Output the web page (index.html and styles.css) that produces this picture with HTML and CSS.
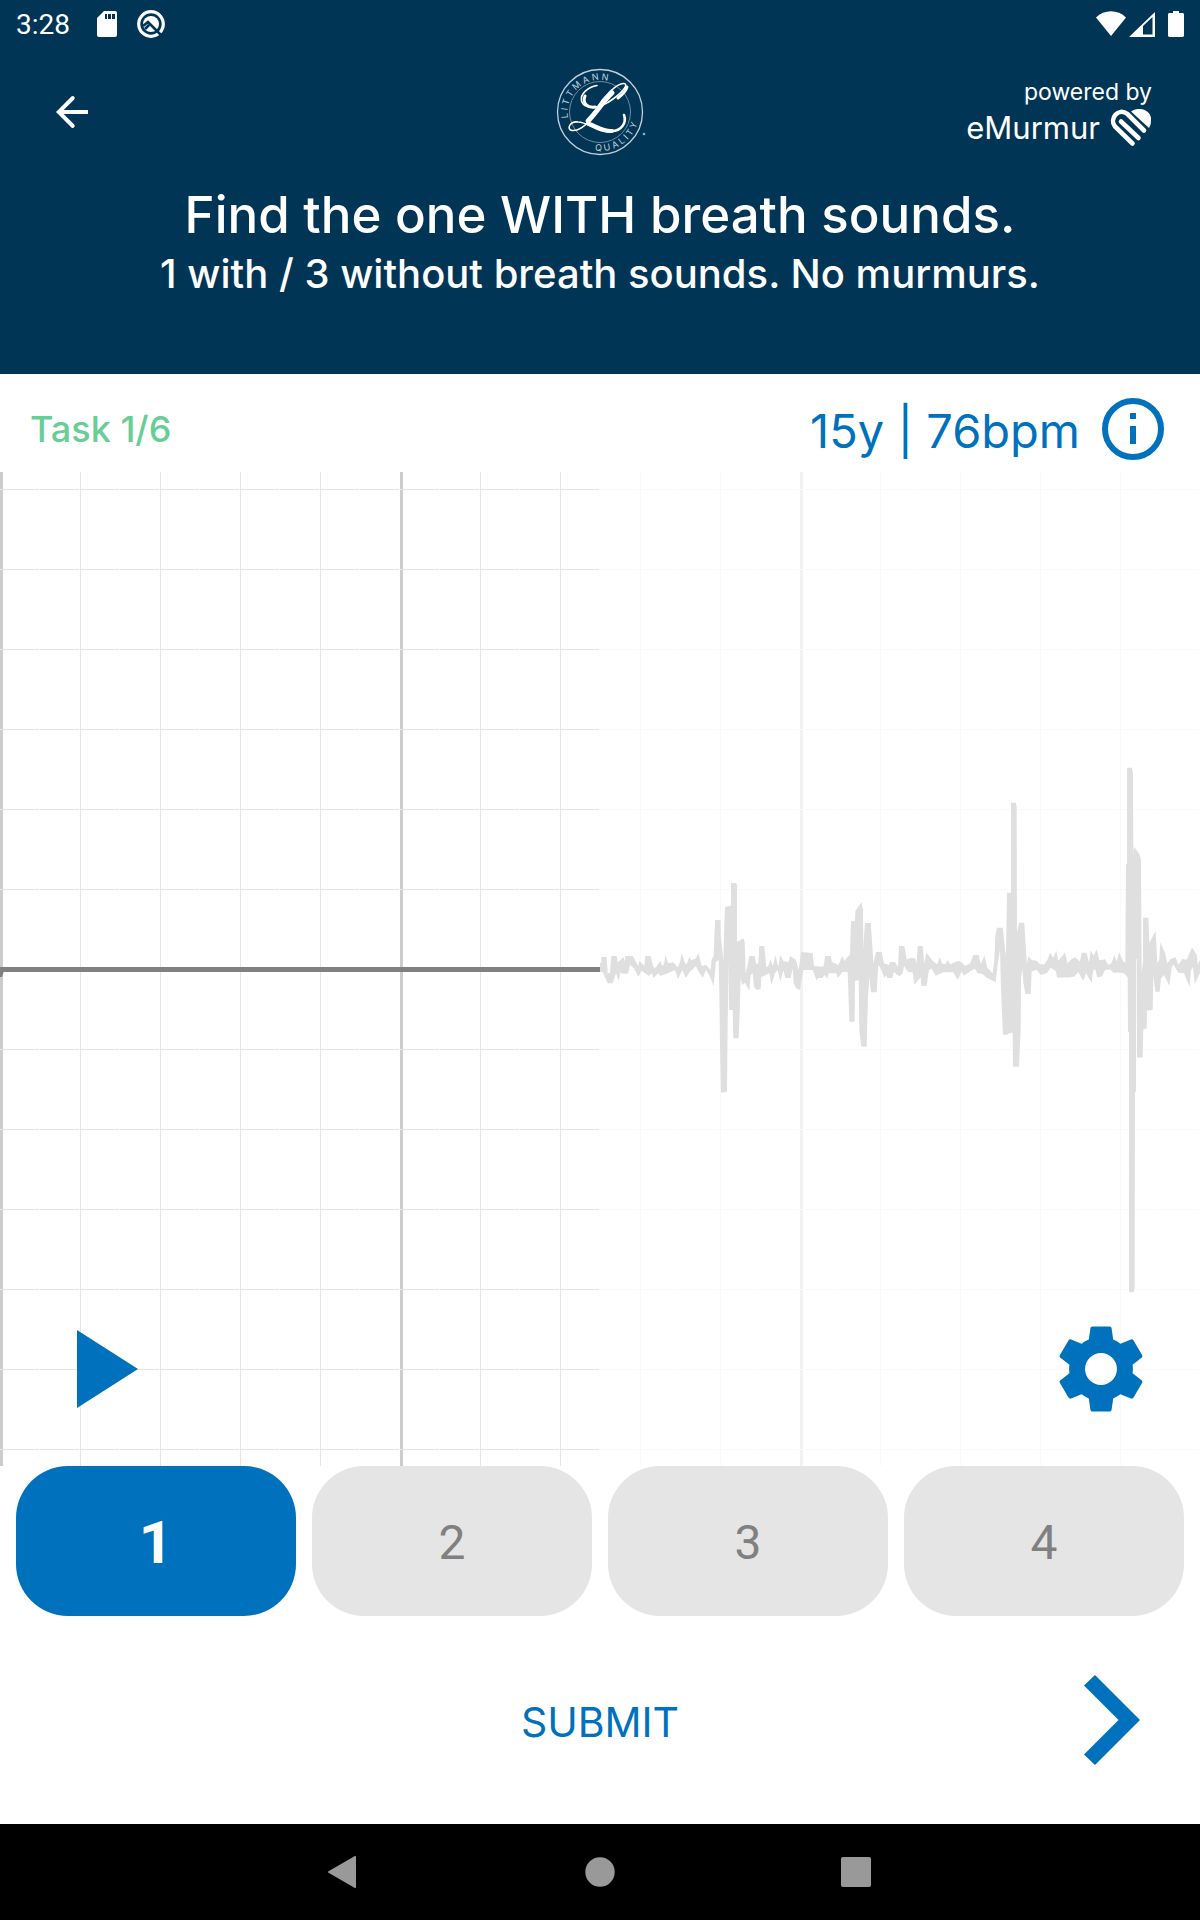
FILE: index.html
```html
<!DOCTYPE html>
<html lang="en">
<head>
<meta charset="utf-8">
<meta name="viewport" content="width=device-width, initial-scale=1">
<title>Find the one with breath sounds</title>
<link rel="stylesheet" href="styles.css">
</head>
<body>
<div class="app">
  <header class="header">
    <div class="status-bar">
      <span class="clock">3:28</span>
      <svg class="status-sd" width="20" height="26" viewBox="0 0 20 26" aria-hidden="true"><path fill="#fff" fill-rule="evenodd" d="M7 0h11a2 2 0 0 1 2 2v22a2 2 0 0 1-2 2H2a2 2 0 0 1-2-2V7zM8 3v5h2V3zm3 0v5h3V3zm4 0v5h3V3z"/></svg>
      <svg class="status-q" width="28" height="28" viewBox="0 0 28 28" aria-hidden="true"><circle cx="14" cy="14" r="12.3" fill="none" stroke="#fff" stroke-width="3.2"/><circle cx="14" cy="14" r="8" fill="#fff"/><path fill="none" stroke="#003556" stroke-width="2.6" d="M6 16l5-4 13 13M8 19l4-4"/></svg>
      <span class="spacer"></span>
      <svg width="30" height="26" viewBox="0 0 30 26" aria-hidden="true"><path fill="#fff" d="M0 6.500C8-2 22-2 30 6.500L15 25z"/></svg>
      <svg class="status-signal" width="26" height="26" viewBox="0 0 26 26" aria-hidden="true"><path fill="#fff" fill-rule="evenodd" d="M0 26L26 1v25zM14 15v8.500h9.500V6z"/></svg>
      <svg class="status-battery" width="16" height="26" viewBox="0 0 16 26" aria-hidden="true"><path fill="#fff" d="M5 0h6v2h4l1 1v22l-1 1H1l-1-1V3l1-1h4z"/></svg>
    </div>
    <div class="top-row">
      <button class="icon-button back" aria-label="Back"><svg width="48" height="48" viewBox="0 0 24 24"><path fill="#fff" d="M20 11H7.830l5.290-5.290a1 1 0 0 0-1.410-1.410L4 12l7.710 7.700a1 1 0 0 0 1.410-1.410L7.830 13H20z"/></svg></button>
      <svg class="logo" width="100" height="88" viewBox="-50 -44 100 88" role="img" aria-label="Littmann Quality">
        <defs>
          <path id="arc-top" d="M-32 6A32.500 32.500 0 1 1 32 6"/>
          <path id="arc-bottom" d="M-5 38.700A39 39 0 0 0 38 -9"/>
        </defs>
        <circle r="42.500" fill="none" stroke="#c3d0da" stroke-width="1.300"/>
        <circle r="30.500" fill="none" stroke="#6d8ba1" stroke-width="1"/>
        <text class="logo-text"><textPath href="#arc-top">L I T T M A N N</textPath></text>
        <text class="logo-text"><textPath href="#arc-bottom">Q U A L I T Y</textPath></text>
        <g fill="none" stroke="#fff" stroke-linecap="round" stroke-linejoin="round">
          <path stroke-width="1.600" d="M-3-26.500C-12-25-20-18-18.500-11C-16-2 0-3 13-13C23-20 29-28 24-28.500C17-29 4-16-3-4"/>
          <path stroke-width="1.600" d="M-11 9C-17 16-23 19-28 18.500C-34 17-30 9-22 10C-12 10-4 20 9 20"/>
          <path stroke-width="3" d="M-15-16C-18-8-12-4-5-5M27-25C26-21 22-17 18-14"/>
          <path stroke-width="5" d="M12-19C3-11-3 0-12 9"/>
          <path stroke-width="4" d="M-12 11.500C-4 14 4 20 12 19"/>
          <path stroke-width="2.600" d="M12 19C21 19 27 11 24 3"/>
        </g>
        <circle cx="44" cy="22" r="1.300" fill="#9bb0bf"/>
      </svg>
      <div class="brand">
        <span class="powered">powered by</span>
        <span class="brand-name">eMurmur
          <svg width="42" height="38" viewBox="0 0 42 38" aria-hidden="true"><g fill="none" stroke="#fff" stroke-width="4.600" stroke-linecap="round"><path d="M22.500 34.500L5 17.500C-1 10 8-2 17.500 5L34 21.500"/><path d="M11 12.500l17.500 16.500"/></g><path fill="#fff" d="M21 2.500C29-3 40 1 41 9c0 4 0 7-2 10z"/></svg>
        </span>
      </div>
    </div>
    <h1>Find the one WITH breath sounds.</h1>
    <p class="subtitle">1 with / 3 without breath sounds. No murmurs.</p>
  </header>

  <main class="main">
    <div class="info-row">
      <span class="task">Task 1/6</span>
      <span class="patient">15y | 76bpm</span>
      <button class="icon-button info" aria-label="Patient information"><svg width="62" height="62" viewBox="0 0 62 62"><circle cx="31" cy="31" r="28" fill="none" stroke="#0071bc" stroke-width="6"/><path fill="#0071bc" d="M28 15h6v6h-6zM28 28h6v18h-6z"/></svg></button>
    </div>

    <section class="chart" aria-label="Phonocardiogram">
      <svg class="trace" width="100%" height="100%" aria-hidden="true">
        <defs>
          <pattern id="fine-columns" width="80" height="80" patternUnits="userSpaceOnUse"><path fill="#e5e5e5" d="M0 0h1v80H0z"/></pattern>
          <pattern id="major-columns" width="400" height="80" patternUnits="userSpaceOnUse"><path fill="#ccc" d="M0 0h3v80H0z"/></pattern>
          <pattern id="rows" width="40" height="80" patternUnits="userSpaceOnUse"><path fill="#e5e5e5" d="M0 17h39v1H0z"/><path fill="#fff" d="M39 17h1v1h-1z"/></pattern>
        </defs>
        <rect width="100%" height="100%" fill="url(#fine-columns)"/>
        <rect width="100%" height="100%" fill="url(#major-columns)"/>
        <rect width="100%" height="100%" fill="url(#rows)"/>
        <svg y="50%" width="50%" overflow="visible"><rect y="-2" width="100%" height="5" fill="#808080"/><path fill="#808080" d="M0 2h4l-2 6H0z"/></svg>
        <svg x="50%" y="50%" overflow="visible" fill="#808080">
          <path transform="translate(-10 -209) scale(.33333)" d="M30 608L34 608 34 591 50 591 53 640 60 638 64 588 80 588 83 607 101 591 104 606 106 588 128 588 145 618 148 602 163 618 166 588 182 588 190 622 196 624 211 603 217 618 222 612 226 585 235 610 250 607 263 622 270 605 275 579 285 610 290 612 298 591 304 601 318 595 325 579 335 618 349 615 362 630 365 598 371 588 373 534 375 480 392 480 392 525 397 567 400 603 402 522 405 441 423 437 423 369 438 369 441 376 441 545 452 540 460 535 464 545 467 640 473 615 478 588 494 588 499 612 505 610 508 558 523 558 529 622 535 618 541 597 549 618 556 585 565 620 571 585 580 603 595 606 601 588 618 600 626 630 633 576 668 579 672 618 700 620 706 588 722 588 726 606 745 615 757 588 763 603 780 583 783 483 795 483 796 453 815 426 819 450 820 570 822 528 825 489 842 489 846 540 850 610 858 576 875 576 882 610 897 615 899 606 915 606 924 620 927 558 930 558 930 648 921 645 912 635 907 654 892 654 888 645 883 654 872 625 865 615 860 697 843 697 838 650 834 711 830 860 814 860 808 812 806 660 795 663 794 785 778 785 775 690 773 635 757 636 744 654 738 640 716 640 712 656 703 645 698 654 684 654 680 662 668 630 640 630 630 690 620 686 611 672 608 625 602 654 586 654 580 630 571 665 563 630 555 640 544 674 538 640 514 651 512 687 500 690 492 680 488 640 482 645 478 692 465 668 457 675 452 655 449 760 446 835 430 835 428 750 417 750 416 605 413 795 411 995 393 998 390 848 388 695 386 600 378 605 371 678 360 650 348 630 338 654 326 635 318 618 300 635 287 654 277 630 264 657 255 630 233 640 212 648 205 640 190 654 186 640 176 648 155 632 145 650 132 625 120 615 114 641 97 641 92 636 86 662 78 640 68 670 53 670 42 645 38 636 30 636z"/>
          <path transform="translate(290 -219) scale(.33333 .35714)" d="M28 620L28 549 43 549 50 587 60 583 75 583 80 597 83 549 98 549 103 597 109 568 130 592 142 600 149 580 157 598 166 600 173 588 180 600 205 590 215 594 225 604 240 598 250 574 266 574 273 600 283 574 292 610 308 625 313 587 316 521 321 498 339 498 342 530 345 557 348 575 351 400 363 400 363 148 377 148 380 158 381 511 387 484 403 484 406 531 411 600 415 577 425 588 440 590 450 600 463 600 472 588 480 568 490 582 499 562 505 590 525 567 532 597 545 585 555 580 570 592 575 568 590 568 597 595 602 560 611 577 620 557 628 589 645 586 655 602 664 597 673 574 680 592 687 566 699 590 706 597 708 319 711 319 711 50 726 50 729 65 730 291 732 271 748 292 753 306 755 625 759 590 759 470 775 470 778 540 797 507 802 597 808 585 811 538 825 568 832 597 842 585 857 580 865 601 877 585 890 587 906 553 920 573 924 603 928 590 930 590 930 625 914 655 909 608 903 615 899 664 882 625 865 624 850 600 845 610 838 660 822 630 813 640 809 677 796 677 790 632 788 727 771 730 770 780 760 781 758 861 741 861 740 585 738 585 738 957 735 959 734 1505 731 1518 717 1518 717 790 714 790 713 637 703 626 688 623 670 624 660 614 645 616 636 634 622 636 615 612 609 620 605 652 588 625 580 646 565 622 553 634 538 637 501 637 497 618 482 610 470 625 452 630 440 615 425 620 422 683 406 683 400 650 397 612 393 640 392 783 387 887 369 887 368 792 355 794 353 797 339 797 336 736 333 670 330 560 323 600 317 650 290 638 278 627 262 625 255 612 240 620 222 632 215 620 203 644 190 622 160 622 137 632 125 612 117 615 110 660 94 661 92 636 73 657 68 622 55 622 42 605 38 625 28 634z"/>
        </svg>
        <rect x="50%" width="50%" height="100%" fill="#fff" fill-opacity=".75"/>
      </svg>
      <div class="chart-controls">
        <button class="icon-button play" aria-label="Play"><svg width="61" height="78" viewBox="0 0 61 78"><path fill="#0071bc" d="M0 0l61 39L0 78z"/></svg></button>
        <button class="icon-button settings" aria-label="Settings"><svg width="102" height="102" viewBox="0 0 24 24"><circle cx="12" cy="12" r="5" fill="#fff"/><path fill="#0071bc" d="M19.430 12.980c.04-.32.07-.64.07-.98s-.03-.66-.07-.98l2.110-1.650c.19-.15.24-.42.12-.64l-2-3.460c-.12-.22-.39-.3-.61-.22l-2.490 1c-.52-.4-1.080-.73-1.690-.98l-.38-2.650C14.460 2.180 14.250 2 14 2h-4c-.25 0-.46.18-.49.42l-.38 2.650c-.61.25-1.170.59-1.690.98l-2.490-1c-.23-.09-.49 0-.61.22l-2 3.460c-.13.22-.07.49.12.64l2.110 1.650c-.04.32-.07.65-.07.98s.03.66.07.98l-2.110 1.650c-.19.15-.24.42-.12.64l2 3.460c.12.22.39.3.61.22l2.490-1c.52.4 1.080.73 1.690.98l.38 2.650c.03.24.24.42.49.42h4c.25 0 .46-.18.49-.42l.38-2.650c.61-.25 1.170-.59 1.690-.98l2.490 1c.23.09.49 0 .61-.22l2-3.460c.12-.22.07-.49-.12-.64zM12 15.750a3.750 3.750 0 1 1 0-7.500 3.750 3.750 0 0 1 0 7.500z"/></svg></button>
      </div>
    </section>

    <div class="choices">
      <button class="choice selected">1</button>
      <button class="choice">2</button>
      <button class="choice">3</button>
      <button class="choice">4</button>
    </div>

    <div class="submit-row">
      <button class="submit">SUBMIT</button>
      <button class="icon-button next" aria-label="Next"><svg width="56" height="90" viewBox="0 0 56 90"><path fill="#0071bc" d="M11 0l45 45-45 45L0 79.500 34.500 45 0 10.500z"/></svg></button>
    </div>
  </main>

  <nav class="nav-bar" aria-label="System">
    <button class="icon-button" aria-label="Back"><svg width="32" height="32" viewBox="0 0 32 32"><path fill="#999" stroke="#999" stroke-width="2" stroke-linejoin="round" d="M1 16L27 1v30z"/></svg></button>
    <button class="icon-button" aria-label="Home"><svg width="32" height="32" viewBox="0 0 32 32"><circle cx="16" cy="16" r="14.700" fill="#999"/></svg></button>
    <button class="icon-button" aria-label="Overview"><svg width="32" height="32" viewBox="0 0 32 32"><rect x="1" y="1" width="30" height="30" rx="2" fill="#999"/></svg></button>
  </nav>
</div>
</body>
</html>
```
FILE: styles.css
```css
* {
  box-sizing: border-box;
}

body {
  margin: 0;
  background: #fff;
  font-family: Inter, "Liberation Sans", sans-serif;
}

button {
  padding: 0;
  border: 0;
  background: none;
  font: inherit;
  color: inherit;
  cursor: pointer;
}

svg {
  display: block;
}

.app {
  display: flex;
  flex-direction: column;
  min-height: 100vh;
}

.header {
  padding-bottom: 76px;
  background: #003556;
  color: #fff;
  text-align: center;
}

.status-bar {
  display: flex;
  align-items: center;
  height: 48px;
  padding: 0 16px;
}

.clock {
  padding-top: 2px;
  font-family: Roboto, sans-serif;
  font-size: 28px;
  line-height: 32px;
}

.status-sd {
  margin-left: 27px;
}

.status-q {
  margin-left: 20px;
}

.spacer {
  flex: 1;
}

.status-signal {
  margin-left: 3px;
}

.status-battery {
  margin-left: 13px;
}

.top-row {
  display: grid;
  grid-template-columns: 1fr auto 1fr;
  align-items: center;
  height: 128px;
  padding: 0 48px;
}

.back {
  justify-self: start;
}

.logo-text {
  fill: #c3d0da;
  font-size: 9px;
}

.brand {
  justify-self: end;
  display: flex;
  flex-direction: column;
  align-items: flex-end;
}

.powered {
  font-size: 23px;
  line-height: 32px;
}

.brand-name {
  display: flex;
  align-items: center;
  gap: 10px;
  font-size: 31px;
  line-height: 40px;
}

h1 {
  margin: 0;
  padding-top: 4px;
  font-size: 51px;
  line-height: 70px;
  font-weight: 500;
}

.subtitle {
  margin: 0;
  font-size: 40px;
  line-height: 48px;
  font-weight: 500;
}

.main {
  flex: 1;
  display: flex;
  flex-direction: column;
}

.info-row {
  display: flex;
  align-items: center;
  height: 98px;
  padding: 12px 36px 0 30px;
}

.task {
  flex: 1;
  color: #69cd96;
  font-size: 36px;
  line-height: 40px;
  font-weight: 500;
}

.patient {
  padding-top: 4px;
  color: #0071bc;
  font-size: 47px;
  line-height: 56px;
}

.info {
  margin-left: 22px;
}

.chart {
  flex: 1;
  display: grid;
  min-height: 480px;
}

.trace,
.chart-controls {
  grid-area: 1 / 1;
}

.trace {
  overflow: hidden;
}

.chart-controls {
  z-index: 1;
  align-self: end;
  display: flex;
  align-items: center;
  justify-content: space-between;
  padding: 0 48px 46px 77px;
}

.choices {
  display: grid;
  grid-template-columns: repeat(4, 1fr);
  gap: 16px;
  padding: 0 16px;
}

.choice {
  height: 150px;
  padding-top: 2px;
  border-radius: 52px;
  background: #e5e5e5;
  color: #808080;
  font-family: Roboto, sans-serif;
  font-size: 48px;
}

.choice.selected {
  background: #0071bc;
  color: #fff;
  font-size: 60px;
  font-weight: 700;
}

.submit-row {
  display: grid;
  grid-template-columns: 1fr auto 1fr;
  align-items: center;
  height: 208px;
  padding: 0 60px;
}

.submit {
  grid-column: 2;
  padding-top: 4px;
  color: #0071bc;
  font-size: 41px;
  line-height: 56px;
}

.next {
  justify-self: end;
}

.nav-bar {
  display: flex;
  align-items: center;
  justify-content: center;
  gap: 224px;
  height: 96px;
  background: #000;
}
```
